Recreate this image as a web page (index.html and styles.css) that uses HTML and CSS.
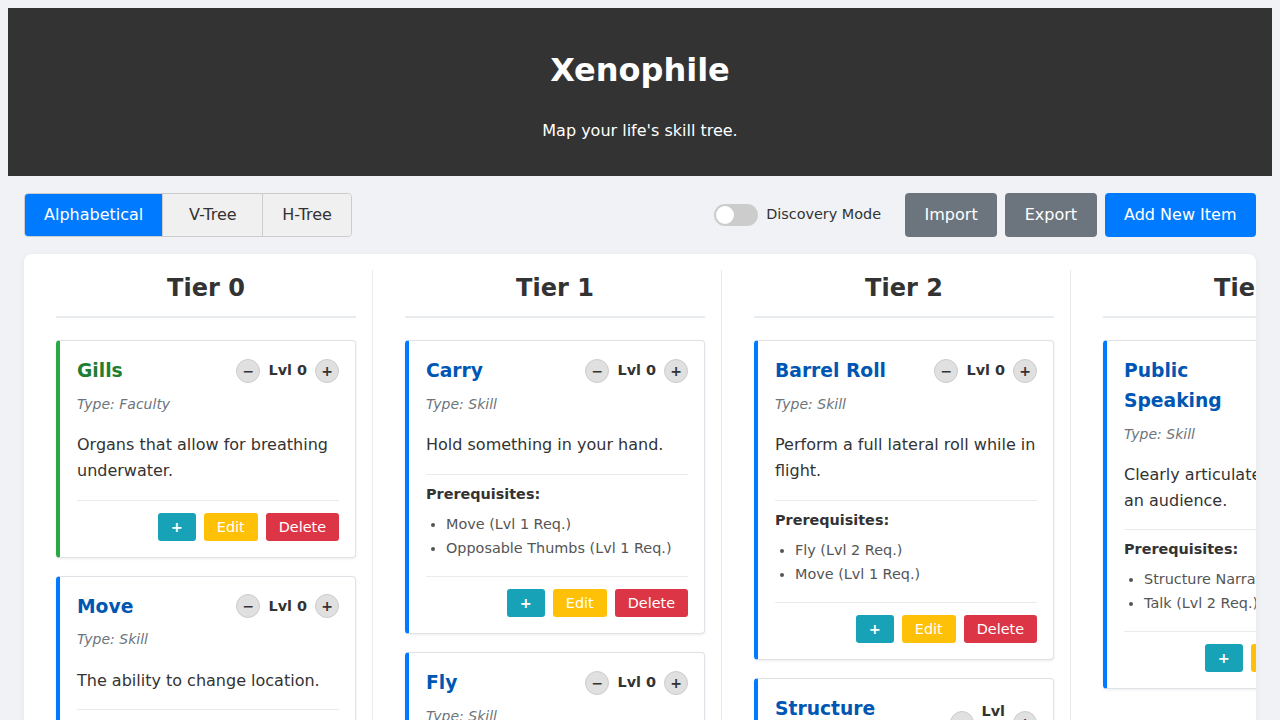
FILE: index.html
```html
<!DOCTYPE html>
<html lang="en">
<head>
<meta charset="utf-8">
<title>Xenophile</title>
<link rel="stylesheet" href="styles.css">
</head>
<body>
<header class="app-header">
  <h1>Xenophile</h1>
  <p>Map your life's skill tree.</p>
</header>
<main class="main">
  <div class="toolbar">
    <div class="view-group">
      <button class="view-btn active">Alphabetical</button>
      <button class="view-btn view-btn-wide">V-Tree</button>
      <button class="view-btn">H-Tree</button>
    </div>
    <div class="toolbar-right">
      <label class="discovery">
        <span class="switch"><span class="knob"></span></span>
        <span class="discovery-label">Discovery Mode</span>
      </label>
      <button class="btn btn-gray">Import</button>
      <button class="btn btn-gray">Export</button>
      <button class="btn btn-blue">Add New Item</button>
    </div>
  </div>

  <section class="board">
    <div class="column">
      <h2 class="tier-title">Tier 0</h2>
      <article class="card faculty">
        <div class="card-head">
          <h3 class="card-title">Gills</h3>
          <div class="lvl"><button class="lvl-btn">−</button><span class="lvl-text">Lvl 0</span><button class="lvl-btn">+</button></div>
        </div>
        <p class="type">Type: Faculty</p>
        <p class="desc">Organs that allow for breathing underwater.</p>
        <div class="actions"><button class="abtn add">+</button><button class="abtn edit">Edit</button><button class="abtn del">Delete</button></div>
      </article>
      <article class="card">
        <div class="card-head">
          <h3 class="card-title">Move</h3>
          <div class="lvl"><button class="lvl-btn">−</button><span class="lvl-text">Lvl 0</span><button class="lvl-btn">+</button></div>
        </div>
        <p class="type">Type: Skill</p>
        <p class="desc">The ability to change location.</p>
        <div class="actions"><button class="abtn add">+</button><button class="abtn edit">Edit</button><button class="abtn del">Delete</button></div>
      </article>
      <article class="card faculty">
        <div class="card-head">
          <h3 class="card-title">Opposable Thumbs</h3>
          <div class="lvl"><button class="lvl-btn">−</button><span class="lvl-text">Lvl 0</span><button class="lvl-btn">+</button></div>
        </div>
        <p class="type">Type: Faculty</p>
        <p class="desc">Thumbs that can touch the other fingers.</p>
        <div class="actions"><button class="abtn add">+</button><button class="abtn edit">Edit</button><button class="abtn del">Delete</button></div>
      </article>
    </div>

    <div class="column">
      <h2 class="tier-title">Tier 1</h2>
      <article class="card">
        <div class="card-head">
          <h3 class="card-title">Carry</h3>
          <div class="lvl"><button class="lvl-btn">−</button><span class="lvl-text">Lvl 0</span><button class="lvl-btn">+</button></div>
        </div>
        <p class="type">Type: Skill</p>
        <p class="desc">Hold something in your hand.</p>
        <div class="prereq">
          <strong>Prerequisites:</strong>
          <ul>
            <li>Move (Lvl 1 Req.)</li>
            <li>Opposable Thumbs (Lvl 1 Req.)</li>
          </ul>
        </div>
        <div class="actions"><button class="abtn add">+</button><button class="abtn edit">Edit</button><button class="abtn del">Delete</button></div>
      </article>
      <article class="card">
        <div class="card-head">
          <h3 class="card-title">Fly</h3>
          <div class="lvl"><button class="lvl-btn">−</button><span class="lvl-text">Lvl 0</span><button class="lvl-btn">+</button></div>
        </div>
        <p class="type">Type: Skill</p>
        <p class="desc">Move through the air under your own power.</p>
        <div class="prereq">
          <strong>Prerequisites:</strong>
          <ul>
            <li>Move (Lvl 1 Req.)</li>
          </ul>
        </div>
        <div class="actions"><button class="abtn add">+</button><button class="abtn edit">Edit</button><button class="abtn del">Delete</button></div>
      </article>
    </div>

    <div class="column">
      <h2 class="tier-title">Tier 2</h2>
      <article class="card">
        <div class="card-head">
          <h3 class="card-title">Barrel Roll</h3>
          <div class="lvl"><button class="lvl-btn">−</button><span class="lvl-text">Lvl 0</span><button class="lvl-btn">+</button></div>
        </div>
        <p class="type">Type: Skill</p>
        <p class="desc">Perform a full lateral roll while in flight.</p>
        <div class="prereq">
          <strong>Prerequisites:</strong>
          <ul>
            <li>Fly (Lvl 2 Req.)</li>
            <li>Move (Lvl 1 Req.)</li>
          </ul>
        </div>
        <div class="actions"><button class="abtn add">+</button><button class="abtn edit">Edit</button><button class="abtn del">Delete</button></div>
      </article>
      <article class="card">
        <div class="card-head">
          <h3 class="card-title">Structure Narrative</h3>
          <div class="lvl"><button class="lvl-btn">−</button><span class="lvl-text">Lvl 0</span><button class="lvl-btn">+</button></div>
        </div>
        <p class="type">Type: Skill</p>
        <p class="desc">Arrange ideas into a compelling story.</p>
        <div class="actions"><button class="abtn add">+</button><button class="abtn edit">Edit</button><button class="abtn del">Delete</button></div>
      </article>
    </div>

    <div class="column">
      <h2 class="tier-title">Tier 3</h2>
      <article class="card">
        <div class="card-head">
          <h3 class="card-title">Public Speaking</h3>
          <div class="lvl"><button class="lvl-btn">−</button><span class="lvl-text">Lvl 0</span><button class="lvl-btn">+</button></div>
        </div>
        <p class="type">Type: Skill</p>
        <p class="desc">Clearly articulate your ideas to an audience.</p>
        <div class="prereq">
          <strong>Prerequisites:</strong>
          <ul>
            <li>Structure Narrative (Lvl 1 Req.)</li>
            <li>Talk (Lvl 2 Req.)</li>
          </ul>
        </div>
        <div class="actions"><button class="abtn add">+</button><button class="abtn edit">Edit</button><button class="abtn del">Delete</button></div>
      </article>
    </div>
  </section>
</main>
</body>
</html>
```

FILE: styles.css
```css
* {
  box-sizing: border-box;
}

body {
  margin: 8px;
  background: #f0f2f5;
  font-family: "DejaVu Sans", "Noto Sans", sans-serif;
  color: #333;
  line-height: 1.6;
}

button {
  font-family: inherit;
  cursor: pointer;
}

/* Header */
.app-header {
  background: #333;
  color: #fff;
  text-align: center;
  padding: 43px 20px 32px;
}

.app-header h1 {
  margin: 0 0 29px;
  font-size: 32px;
  line-height: 1.2;
  font-weight: bold;
}

.app-header p {
  margin: 0;
  font-size: 16px;
}

/* Main */
.main {
  padding: 17px 16px 0;
}

.toolbar {
  display: flex;
  justify-content: space-between;
  align-items: center;
  margin-bottom: 17px;
}

.view-group {
  display: flex;
  border: 1px solid #ccc;
  border-radius: 4px;
  overflow: hidden;
}

.view-btn {
  border: none;
  border-right: 1px solid #ccc;
  background: #f0f0f0;
  color: #333;
  font-size: 16px;
  line-height: 22px;
  padding: 10px 19px;
}

.view-btn-wide {
  min-width: 100px;
}

.view-btn:last-child {
  border-right: none;
}

.view-btn.active {
  background: #007bff;
  color: #fff;
}

.toolbar-right {
  display: flex;
  align-items: center;
  gap: 8px;
}

.discovery {
  display: flex;
  align-items: center;
  gap: 8px;
  margin-right: 16px;
}

.switch {
  width: 44px;
  height: 22px;
  border-radius: 11px;
  background: #ccc;
  display: flex;
  align-items: center;
  padding: 0 2px;
}

.knob {
  width: 18px;
  height: 18px;
  border-radius: 50%;
  background: #fff;
}

.discovery-label {
  font-size: 14.4px;
  color: #333;
}

.btn {
  border: none;
  border-radius: 4px;
  color: #fff;
  font-size: 16px;
  line-height: 24px;
  padding: 10px 19.5px;
}

.btn-gray {
  background: #6c757d;
}

.btn-blue {
  background: #007bff;
}

/* Board */
.board {
  display: flex;
  gap: 16px;
  background: #fff;
  border-radius: 8px;
  padding: 16px;
  box-shadow: 0 2px 6px rgba(0, 0, 0, 0.05);
  overflow: hidden;
}

.column {
  flex: 0 0 333px;
  width: 333px;
  padding: 0 16px;
  border-right: 1px solid #e9ecef;
}

.tier-title {
  margin: 4px 0 22px;
  padding-bottom: 14px;
  border-bottom: 2px solid #e9ecef;
  font-size: 24px;
  line-height: 28px;
  text-align: center;
  color: #333;
}

/* Card */
.card {
  background: #fff;
  border: 1px solid #dee2e6;
  border-left: 4px solid #007bff;
  border-radius: 4px;
  padding: 15px 16px 16px 17px;
  margin-bottom: 18px;
  box-shadow: 0 1px 3px rgba(0, 0, 0, 0.08);
}

.card.faculty {
  border-left-color: #28a745;
}

.card-head {
  display: flex;
  justify-content: space-between;
  align-items: center;
}

.card-title {
  margin: 0;
  font-size: 18.72px;
  line-height: 1.6;
  color: #0056b3;
}

.faculty .card-title {
  color: #1e7e34;
}

.lvl {
  display: flex;
  align-items: center;
  gap: 8px;
}

.lvl-btn {
  flex-shrink: 0;
  width: 24px;
  height: 24px;
  border-radius: 50%;
  border: 1px solid #ccc;
  background: #e0e0e0;
  color: #333;
  font-size: 14px;
  font-weight: bold;
  line-height: 1;
  padding: 0;
}

.lvl-text {
  font-size: 14.4px;
  font-weight: bold;
  color: #333;
  text-align: center;
}

.type {
  margin: 7px 0 0;
  font-size: 14px;
  font-style: italic;
  color: #6c757d;
}

.desc {
  margin: 17px 0 16px;
  font-size: 16px;
  color: #333;
}

.prereq {
  border-top: 1px solid #e9ecef;
  padding-top: 8px;
  margin-bottom: 16px;
  font-size: 14.4px;
}

.prereq strong {
  display: block;
  color: #333;
}

.prereq ul {
  margin: 6px 0 0;
  padding-left: 20px;
  color: #555;
}

.prereq li {
  line-height: 24px;
}

.actions {
  display: flex;
  justify-content: flex-end;
  gap: 8px;
  border-top: 1px solid #e9ecef;
  padding-top: 12px;
}

.abtn {
  border: 1px solid transparent;
  border-radius: 3px;
  color: #fff;
  font-size: 14.4px;
  line-height: 18px;
  padding: 4px 12px;
}

.abtn.add {
  background: #17a2b8;
  font-weight: bold;
}

.abtn.edit {
  background: #ffc107;
}

.abtn.del {
  background: #dc3545;
}
```
